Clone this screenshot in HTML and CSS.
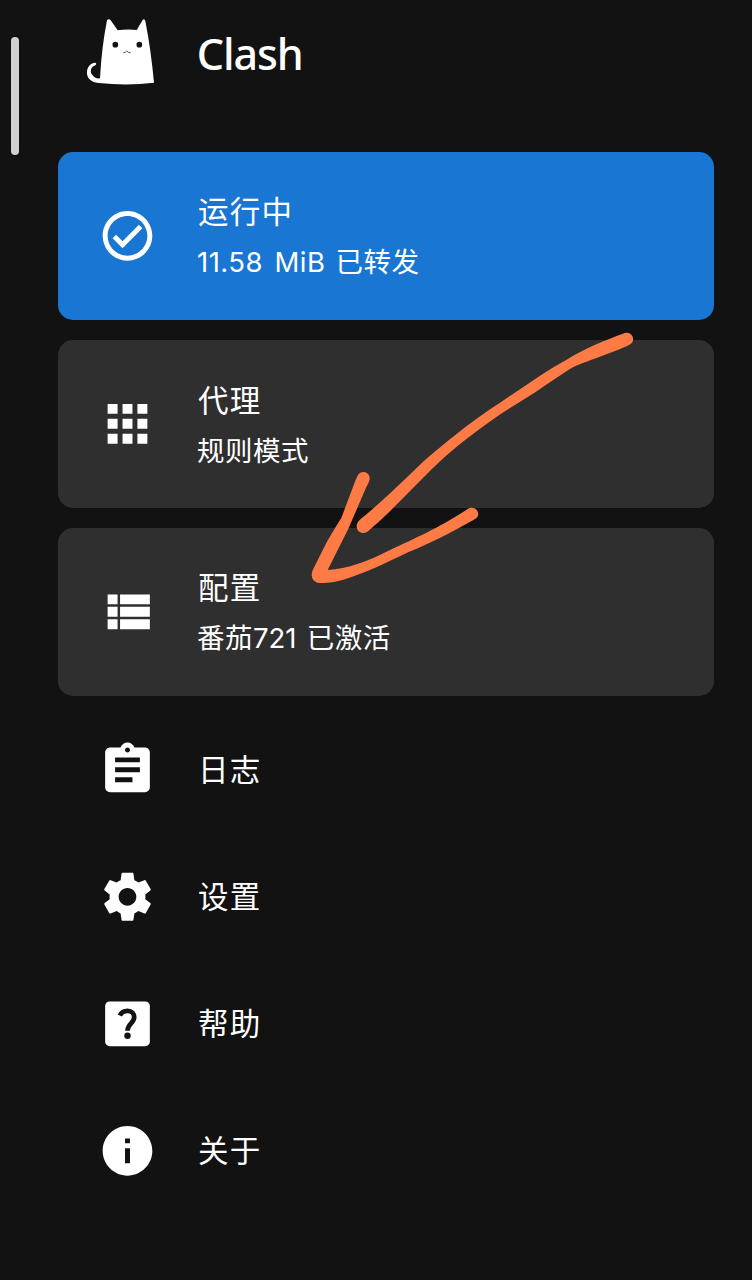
FILE: index.html
```
<!DOCTYPE html>
<html lang="zh-CN">
<head>
<meta charset="utf-8">
<title>Clash</title>
<link rel="stylesheet" href="styles.css">
</head>
<body>
<main class="screen">
  <header class="header">
    <svg class="logo" viewBox="255 50 215 210">
      <path fill="#fff" d="M321 60Q326 53 332 60L353 90Q382 85 410 89L428 59Q433 54 436 62Q453 150 462 247Q382 257 296 248C270 246 259 231 261 213C263 197 273 188 285 187Q291 188 287 194C274 199 269 210 275 221C281 232 291 235 300 234Q305 140 321 60Z"/>
      <circle cx="346" cy="133" r="8.5" fill="#121212"/>
      <circle cx="418" cy="133" r="8.5" fill="#121212"/>
      <path d="M370 157Q377 157 380 152Q384 157 392 157" fill="none" stroke="#333" stroke-width="2.5"/>
    </svg>
    <h1 class="brand">Clash</h1>
  </header>

  <section class="cards">
    <article class="card card-active">
      <svg class="icon" viewBox="0 0 24 24"><path d="M16.59 7.58 10 14.17l-2.59-2.58L6 13l4 4 8-8zM12 2C6.48 2 2 6.48 2 12s4.48 10 10 10 10-4.48 10-10S17.52 2 12 2zm0 18c-4.42 0-8-3.58-8-8s3.58-8 8-8 8 3.58 8 8-3.58 8-8 8z"/></svg>
      <div class="text">
        <h2 class="title">运行中</h2>
        <p class="sub"><span class="traffic">11.58 MiB</span> 已转发</p>
      </div>
    </article>
    <article class="card">
      <svg class="icon" viewBox="0 0 24 24"><path d="M4 8h4V4H4zm6 12h4v-4h-4zm-6 0h4v-4H4zm0-6h4v-4H4zm6 0h4v-4h-4zm6-10v4h4V4zm-6 4h4V4h-4zm6 6h4v-4h-4zm0 6h4v-4h-4z"/></svg>
      <div class="text">
        <h2 class="title">代理</h2>
        <p class="sub">规则模式</p>
      </div>
    </article>
    <article class="card">
      <svg class="icon" viewBox="0 0 24 24"><path d="M4 14h4v-4H4zm0 5h4v-4H4zM4 9h4V5H4zm5 5h12v-4H9zm0 5h12v-4H9zM9 5v4h12V5z"/></svg>
      <div class="text">
        <h2 class="title">配置</h2>
        <p class="sub">番茄<span class="num">721</span> 已激活</p>
      </div>
    </article>
  </section>

  <nav class="menu">
    <a class="item">
      <svg class="icon" viewBox="0 0 24 24"><path d="M19 3h-4.18C14.4 1.84 13.3 1 12 1s-2.4.84-2.82 2H5c-1.1 0-2 .9-2 2v14c0 1.1.9 2 2 2h14c1.1 0 2-.9 2-2V5c0-1.1-.9-2-2-2zm-7 0c.55 0 1 .45 1 1s-.45 1-1 1-1-.45-1-1 .45-1 1-1zm2 14H7v-2h7zm3-4H7v-2h10zm0-4H7V7h10z"/></svg>
      <span class="title">日志</span>
    </a>
    <a class="item">
      <svg class="icon" viewBox="-0.45 -0.45 24.9 24.9"><path d="M19.43 12.98c.04-.32.07-.64.07-.98s-.03-.66-.07-.98l2.11-1.65c.19-.15.24-.42.12-.64l-2-3.46c-.12-.22-.39-.3-.61-.22l-2.49 1c-.52-.4-1.08-.73-1.69-.98l-.38-2.65C14.46 2.18 14.25 2 14 2h-4c-.25 0-.46.18-.49.42l-.38 2.65c-.61.25-1.17.59-1.69.98l-2.49-1c-.23-.09-.49 0-.61.22l-2 3.46c-.13.22-.07.49.12.64l2.11 1.65c-.04.32-.07.65-.07.98s.03.66.07.98l-2.11 1.65c-.19.15-.24.42-.12.64l2 3.46c.12.22.39.3.61.22l2.49-1c.52.4 1.08.73 1.69.98l.38 2.65c.03.24.24.42.49.42h4c.25 0 .46-.18.49-.42l.38-2.65c.61-.25 1.17-.59 1.69-.98l2.49 1c.23.09.49 0 .61-.22l2-3.46c.12-.22.07-.49-.12-.64zM12 15.7c-2.04 0-3.7-1.66-3.7-3.7s1.66-3.7 3.7-3.7 3.7 1.66 3.7 3.7-1.66 3.7-3.7 3.7z"/></svg>
      <span class="title">设置</span>
    </a>
    <a class="item">
      <svg class="icon" viewBox="0 0 24 24"><rect x="3" y="3" width="18" height="18" rx="1.8"/><path d="M8.9 8.7C9.5 7.4 10.6 6.8 12 6.8C13.7 6.8 14.7 7.9 14.7 9.4C14.7 11.7 12 12.1 12 14.8" fill="none" stroke="#121212" stroke-width="1.9"/><circle class="cut" cx="12" cy="16.8" r="1.3"/></svg>
      <span class="title">帮助</span>
    </a>
    <a class="item">
      <svg class="icon" viewBox="0 0 24 24"><path d="M12 2C6.48 2 2 6.48 2 12s4.48 10 10 10 10-4.48 10-10S17.52 2 12 2zm1 15h-2v-6h2zm0-8h-2V7h2z"/></svg>
      <span class="title">关于</span>
    </a>
  </nav>

  <div class="scrollbar"></div>
  <svg class="arrow" viewBox="0 0 1050 810">
    <path d="M975 39C992 34 1005 53 997 67Q994 73 980 79C920 105 845 128 811 146C760 179 700 222 630 264C540 322 455 388 395 448C330 512 280 568 204 634C187 648 165 632 171 612Q173 605 182 597C250 542 302 490 371 424C450 354 540 286 600 248C670 202 735 154 800 119C850 88 920 58 975 39Z"/>
    <path d="M174 465C184 449 211 455 209 478Q208 486 199 501L145 626L83 750C142 747 205 724 270 690C350 652 410 627 500 569C520 553 543 574 532 591Q529 596 520 600C450 640 395 668 324 697C260 728 190 762 130 779C98 788 75 790 52 788C35 782 32 765 38 751L80 667Q110 615 124 594L166 482Z"/>
  </svg>
</main>
</body>
</html>
```
FILE: styles.css
```
* { box-sizing: border-box; }

body {
  margin: 0;
  background: #121212;
  color: #fff;
  font-family: "Noto Sans CJK SC", sans-serif;
}

.screen {
  position: relative;
  width: 752px;
  height: 1280px;
  padding: 0 38px 0 58px;
  overflow: hidden;
}

.header {
  display: flex;
  align-items: center;
  height: 152px;
  padding: 0 0 45px 27px;
}

.logo {
  width: 71.7px;
  height: 70px;
  margin-top: -4px;
}

.brand {
  margin: 0 0 0 40px;
  font: 500 43px/60px "Noto Sans", sans-serif;
  letter-spacing: -1.1px;
}

.cards {
  display: flex;
  flex-direction: column;
  gap: 20px;
}

.card {
  display: flex;
  align-items: center;
  gap: 39px;
  height: 168px;
  padding-left: 39px;
  border-radius: 15px;
  background: #2f2f2f;
}

.card-active { background: #1976d2; }

.icon {
  flex: none;
  width: 61px;
  height: 59.6px;
  fill: #fff;
}

.cut { fill: #121212; }

.title {
  margin: 0;
  padding-left: 1px;
  font-size: 30.5px;
  font-weight: 400;
  line-height: 50px;
  letter-spacing: 1.3px;
}

.sub {
  margin: 0;
  font-size: 27.5px;
  line-height: 50px;
  letter-spacing: 0.5px;
  word-spacing: 3.5px;
  white-space: nowrap;
}

.traffic,
.num {
  font-family: Inter, sans-serif;
  font-size: 27.5px;
  letter-spacing: 0.45px;
}

.num { letter-spacing: 0; }

.menu {
  display: flex;
  flex-direction: column;
  padding-top: 10px;
}

.item {
  display: flex;
  align-items: center;
  gap: 39px;
  height: 127px;
  padding-left: 39px;
}

.item .title { padding-bottom: 4px; }

.scrollbar {
  position: absolute;
  left: 11px;
  top: 37px;
  width: 8px;
  height: 118px;
  border-radius: 4px;
  background: #d0d0d0;
}

.arrow {
  position: absolute;
  left: 300px;
  top: 320px;
  width: 350px;
  height: 270px;
  fill: #ff7b45;
}
```
